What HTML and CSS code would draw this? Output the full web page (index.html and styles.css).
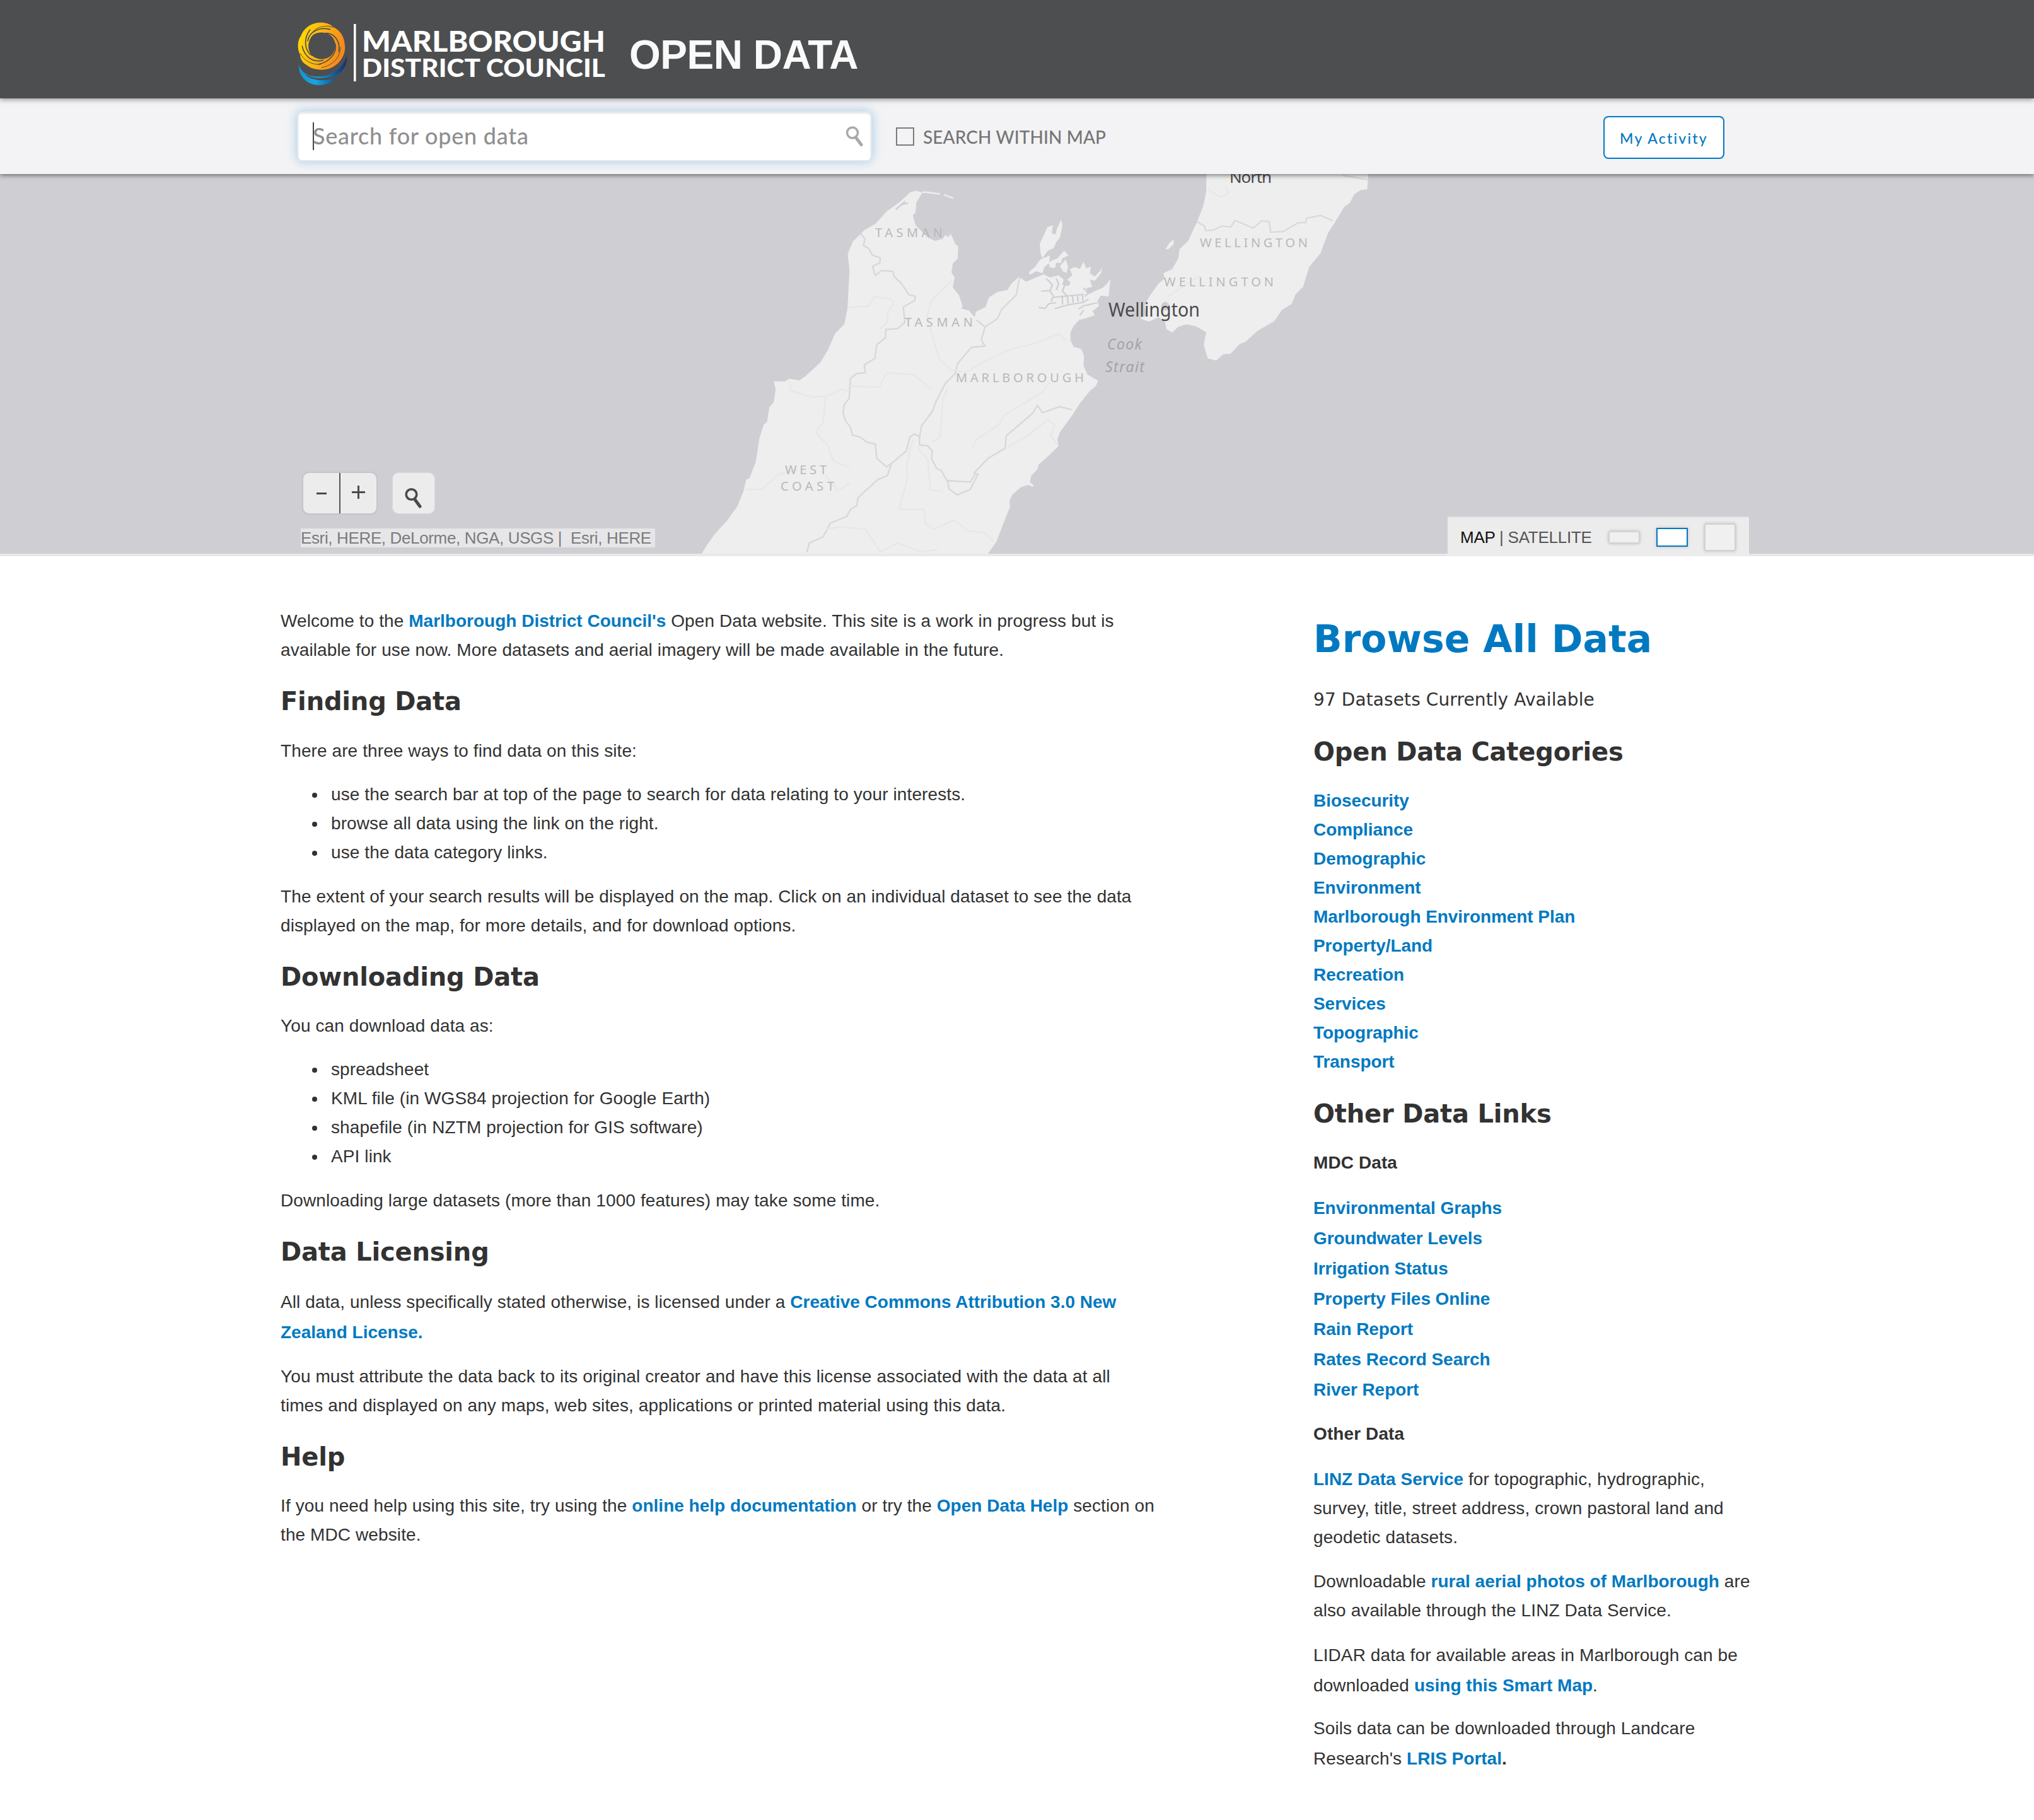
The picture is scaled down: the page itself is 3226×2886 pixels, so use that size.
FILE: index.html
```html
<!DOCTYPE html>
<html lang="en">
<head>
<meta charset="utf-8">
<title>Marlborough District Council Open Data</title>
<link rel="stylesheet" href="styles.css">
</head>
<body>
<header class="masthead">
  <svg class="logo" viewBox="464 26 500 112" role="img" aria-label="Marlborough District Council">
    <defs>
      <linearGradient id="gold" x1="0" y1="0" x2="1" y2="0.3"><stop offset="0" stop-color="#ffe100"/><stop offset="0.5" stop-color="#ffb90f"/><stop offset="1" stop-color="#f58a1c"/></linearGradient>
      <linearGradient id="sea" x1="0" y1="0" x2="1" y2="0"><stop offset="0" stop-color="#1593d2"/><stop offset="0.35" stop-color="#18a5e0"/><stop offset="0.7" stop-color="#0d62a8"/><stop offset="1" stop-color="#1c2a6b"/></linearGradient>
    </defs>
    <g transform="translate(460 20) scale(.33333)">
      <path fill="url(#sea)" d="M41 246C58 300 110 310 160 302C215 292 255 255 271 204C274 250 250 285 215 300C165 318 105 315 70 290C85 318 160 335 225 308C195 335 165 347 130 345C80 340 40 305 41 246Z"/>
      <path fill="url(#gold)" fill-rule="evenodd" d="M120 50C150 42 190 50 205 68C240 85 258 115 260 150C268 190 245 235 205 258C170 280 110 275 80 250C55 235 48 215 48 200C32 170 36 130 52 110C62 80 90 58 120 50ZM105 110C85 135 80 170 100 200C120 222 165 232 195 205C220 180 222 140 200 115C175 90 130 88 105 110Z"/>
      <g fill="none" stroke="#4d4e50" stroke-linecap="round">
        <path stroke-width="5" d="M84 135C90 95 135 65 190 80"/>
        <path stroke-width="3" d="M98 104C120 70 165 55 205 70"/>
        <path stroke-width="5" d="M170 98C215 98 240 140 232 185"/>
        <path stroke-width="5" d="M215 148C225 190 190 235 135 246"/>
        <path stroke-width="3" d="M240 165C238 215 205 250 150 262"/>
        <path stroke-width="5" d="M158 226C115 240 70 215 58 160"/>
        <path stroke-width="3" d="M145 246C105 250 65 228 50 195"/>
        <path stroke-width="5" d="M102 203C70 180 62 125 95 82"/>
      </g>
    </g>
    <rect x="561" y="38" width="3.6" height="91" fill="#fff"/>
    <g fill="#fff" font-family="Lato, sans-serif" font-weight="900">
      <text x="574" y="81.500" font-size="46" textLength="386" lengthAdjust="spacingAndGlyphs">MARLBOROUGH</text>
      <text x="574" y="122" font-size="39" textLength="386" lengthAdjust="spacingAndGlyphs">DISTRICT COUNCIL</text>
    </g>
  </svg>
  <h1 class="site-title">OPEN DATA</h1>
</header>

<div class="searchbar">
  <div class="search-box">
    <span class="caret"></span><span class="placeholder">Search for open data</span>
    <svg class="search-icon" viewBox="0 0 32 36"><circle cx="13" cy="12.500" r="8.500" fill="none" stroke="#a9a9a9" stroke-width="3.500"/><path d="M18 19.500l9 12" stroke="#a9a9a9" stroke-width="5" stroke-linecap="round"/></svg>
  </div>
  <label class="within"><span class="checkbox"></span><span class="within-text">SEARCH WITHIN MAP</span></label>
  <a class="activity">My Activity</a>
</div>

<section class="map">
  <svg class="map-canvas" viewBox="0 276 3226 602">
    <g transform="translate(1080 270) scale(.3954)">
      <path class="land" d="M82 1540L103 1505 135 1460 185 1405 225 1350 250 1290 262 1240 275 1235 300 1170 315 1075 332 1020 345 1010 355 950 372 930 380 880 373 846 415 847 435 836 475 843 500 825 560 770 590 720 618 655 655 618 668 555 671 500 676 400 669 335 690 285 722 255 735 240 780 215 825 165 880 125 920 88 945 82 968 90 944 130 941 170 930 180 941 220 970 250 990 270 1020 283 1050 275 1060 260 1075 268 1080 253 1092 275 1100 295 1112 305 1110 355 1090 375 1085 410 1098 430 1090 470 1115 500 1130 545 1125 555 1155 562 1178 590 1183 568 1222 548 1235 510 1270 488 1310 480 1325 455 1355 428 1385 447 1415 434 1455 417 1480 430 1515 421 1535 438 1530 459 1555 464 1563 451 1550 438 1570 421 1560 396 1580 388 1600 396 1615 367 1625 392 1645 388 1640 413 1660 426 1680 405 1690 388 1685 413 1660 443 1640 438 1650 468 1625 472 1635 497 1660 485 1695 472 1710 455 1723 438 1715 506 1685 502 1670 523 1677 544 1650 565 1660 582 1620 594 1600 598 1575 624 1562 653 1563 683 1575 708 1605 716 1617 742 1615 784 1630 818 1655 834 1673 843 1665 865 1640 885 1600 935 1568 985 1520 1050 1510 1080 1515 1105 1480 1140 1435 1180 1430 1200 1405 1225 1400 1250 1415 1263 1410 1270 1395 1262 1365 1270 1330 1300 1318 1325 1320 1350 1300 1400 1265 1490 1230 1540Z"/>
      <path class="inlet" d="M862 158L885 137 912 132M882 140L900 124"/>
      <path d="M968 88L985 88 1040 95M1055 98L1092 112" stroke="#eee" stroke-width="6" fill="none"/>
      <path class="border" d="M722 255L738 275 732 302 752 312 768 340 800 352 797 372 768 385 780 422 805 402 850 405 855 425 885 455 915 500 940 505 938 522 892 548 898 610 870 635 822 638 820 672 785 700 778 755 735 780 740 812 705 815 680 835 675 915 655 940 650 970 660 1005 680 1030 688 1062 720 1070 745 1090 780 1098 785 1155 825 1190 845 1175 828 1225 790 1240 735 1290 710 1315 705 1345 680 1360 665 1388 600 1415 570 1470 515 1495 505 1532M845 1175L905 1125 918 1070 935 1058 957 1068 957 1102 990 1105 1008 1125 1005 1155 1025 1195 1045 1205 1070 1250 1075 1278 1108 1302 1160 1280 1192 1218 1175 1215 1232 1155 1300 1115 1305 1065 1410 975 1430 943 1450 972 1520 948 1568 960M957 1070L965 1025 1010 965 1022 930 1060 855 1100 815 1110 775 1165 710 1220 705 1205 680 1220 628 1185 600M1220 628L1270 595 1285 560 1345 500 1358 432M1070 1245L1160 1250 1180 1220"/>
      <path class="river" d="M672 550L750 545 775 508 840 515 855 535 830 565 828 610 795 640M1090 440L1005 522 988 585 1005 650 1035 755 1080 800 1145 810 1200 775 1330 715 1400 700 1520 655 1545 685M670 865L795 870 825 812 935 820 1005 880M438 855L442 885 530 910 590 905 640 880 670 885M580 910L570 1010 540 1050 590 1105 610 1165 675 1192M1070 870L1050 920 1040 1070 1010 1088M1170 1115L1185 1080 1275 1020 1300 980 1450 890 1480 850M1310 1110L1390 1065 1470 1000 1500 1018 1485 1065 1510 1100M260 1280L325 1280 390 1220 470 1200M580 1225L630 1285 680 1255M930 1080L905 1180 908 1240 875 1360 975 1360 980 1415 1015 1440 1095 1402 1150 1445 1220 1455 1255 1490M950 1110L990 1160 1000 1280 1050 1290M580 1440L640 1430 740 1440 800 1530 870 1495 960 1530 1030 1522"/>
    </g>
    <g transform="translate(1600 270) scale(.3954 .3333)">
      <path class="land" d="M793 0L792 100 780 170 755 245 720 335 685 375 680 420 655 470 620 490 625 515 600 540 570 590 552 625 545 650 555 690 525 705 562 720 600 700 625 715 632 755 655 772 680 745 712 733 750 742 792 770 782 830 798 895 832 905 860 875 890 872 925 828 950 815 1000 762 1065 718 1095 665 1135 635 1150 590 1180 555 1205 460 1250 395 1280 300 1320 225 1345 175 1368 155 1385 115 1410 95 1438 90 1443 0Z"/>
      <path class="land" d="M660 330L662 350 640 376 628 376 645 345ZM210 235L215 262 205 320 190 342 180 370 155 385 135 418 128 400 124 350 140 310 155 270 177 262 172 300 188 305 192 282ZM222 382L240 405 213 420 210 440 190 440 185 465 165 462 160 440 175 428 195 420ZM165 405L162 440 142 462 135 490 110 480 85 497 80 485 105 460 125 425ZM228 425L238 460 232 488 218 482 205 455Z"/>
      <path class="land" d="M345 575L375 560 395 540 405 520 400 600 370 595 355 620 362 645 335 670 345 690 305 705 288 712 292 670 320 640 310 610Z"/>
      <path class="sea-fill" d="M610 650L615 632 630 624 645 640 640 665 620 668Z"/>
      <path class="inlet" d="M120 652L145 658 160 635 190 630M170 625L175 605 235 598 300 590M185 658L240 640 300 628 320 612M280 660L300 645 355 630M285 690L300 665M150 515L175 545 165 575 180 600M225 545L215 575 232 595M130 575L165 572M215 600L215 640M235 598L238 635M255 596L258 630M275 594L278 625M295 592L298 622M190 515L200 540 190 570M300 560L318 585 305 600"/>
      <path class="border" d="M755 245L785 265 790 287 820 285 855 265 890 270 908 238 980 275 1015 240 1045 245 1050 295 1100 292 1160 250 1190 250 1195 228 1250 215 1300 240M1340 25L1440 45"/>
      <path class="river" d="M800 90L850 128 880 110 870 80M640 600L690 560 770 500"/>
    </g>
    <g class="region">
      <text x="1388" y="375.600" textLength="107">TASMAN</text>
      <text x="1435" y="518" textLength="108">TASMAN</text>
      <text x="1516" y="606" textLength="203">MARLBOROUGH</text>
      <text x="1245" y="752" textLength="66">WEST</text>
      <text x="1238" y="778" textLength="85">COAST</text>
      <text x="1903" y="392" textLength="171">WELLINGTON</text>
      <text x="1846" y="454" textLength="174">WELLINGTON</text>
    </g>
    <g class="strait">
      <text x="1756" y="554" textLength="55">Cook</text>
      <text x="1753" y="590" textLength="62">Strait</text>
    </g>
    <g class="city">
      <text x="1758" y="502" font-size="30" textLength="145" lengthAdjust="spacingAndGlyphs">Wellington</text>
      <text x="1950" y="290" font-size="26" textLength="67">North</text>
    </g>
  </svg>
  <div class="map-tools">
    <div class="tool-row">
      <div class="zoom"><span class="zoom-btn"><i class="minus"></i></span><span class="zoom-btn zoom-in"><i class="minus plus"></i></span></div>
      <div class="locate"><svg viewBox="0 0 66 66"><circle cx="29.500" cy="34" r="8.300" fill="none" stroke="#4a4a4a" stroke-width="3.600"/><path d="M35 42l8 11" stroke="#4a4a4a" stroke-width="5" stroke-linecap="round"/></svg></div>
    </div>
    <div class="attribution">Esri, HERE, DeLorme, NGA, USGS |&nbsp; Esri, HERE</div>
  </div>
  <div class="map-switch">
    <span class="basemap"><b>MAP</b> | SATELLITE</span>
    <span class="size size-s"></span><span class="size size-m"></span><span class="size size-l"></span>
  </div>
</section>

<main class="content">
  <div class="main-col">
    <p>Welcome to the <a>Marlborough District Council's</a> Open Data website. This site is a work in progress but is<br>available for use now. More datasets and aerial imagery will be made available in the future.</p>
    <h2>Finding Data</h2>
    <p>There are three ways to find data on this site:</p>
    <ul>
      <li>use the search bar at top of the page to search for data relating to your interests.</li>
      <li>browse all data using the link on the right.</li>
      <li>use the data category links.</li>
    </ul>
    <p>The extent of your search results will be displayed on the map. Click on an individual dataset to see the data<br>displayed on the map, for more details, and for download options.</p>
    <h2>Downloading Data</h2>
    <p>You can download data as:</p>
    <ul>
      <li>spreadsheet</li>
      <li>KML file (in WGS84 projection for Google Earth)</li>
      <li>shapefile (in NZTM projection for GIS software)</li>
      <li>API link</li>
    </ul>
    <p>Downloading large datasets (more than 1000 features) may take some time.</p>
    <h2>Data Licensing</h2>
    <p class="loose">All data, unless specifically stated otherwise, is licensed under a <a>Creative Commons Attribution 3.0 New<br>Zealand License.</a></p>
    <p>You must attribute the data back to its original creator and have this license associated with the data at all<br>times and displayed on any maps, web sites, applications or printed material using this data.</p>
    <h2>Help</h2>
    <p>If you need help using this site, try using the <a>online help documentation</a> or try the <a>Open Data Help</a> section on<br>the MDC website.</p>
  </div>
  <aside class="side-col">
    <h1 class="browse">Browse All Data</h1>
    <p class="count">97 Datasets Currently Available</p>
    <h2>Open Data Categories</h2>
    <p class="links"><a>Biosecurity</a><a>Compliance</a><a>Demographic</a><a>Environment</a><a>Marlborough Environment Plan</a><a>Property/Land</a><a>Recreation</a><a>Services</a><a>Topographic</a><a>Transport</a></p>
    <h2>Other Data Links</h2>
    <p class="label">MDC Data</p>
    <p class="links loose"><a>Environmental Graphs</a><a>Groundwater Levels</a><a>Irrigation Status</a><a>Property Files Online</a><a>Rain Report</a><a>Rates Record Search</a><a>River Report</a></p>
    <p class="label">Other Data</p>
    <p class="source"><a>LINZ Data Service</a> for topographic, hydrographic,<br>survey, title, street address, crown pastoral land and<br>geodetic datasets.</p>
    <p class="source">Downloadable <a>rural aerial photos of Marlborough</a> are<br>also available through the LINZ Data Service.</p>
    <p class="loose lidar">LIDAR data for available areas in Marlborough can be<br>downloaded <a>using this Smart Map</a>.</p>
    <p class="loose">Soils data can be downloaded through Landcare<br>Research's <a>LRIS Portal</a><b>.</b></p>
  </aside>
</main>
</body>
</html>
```
FILE: styles.css
```css
* { box-sizing: border-box; }
body {
  margin: 0;
  height: 2886px;
  overflow: hidden;
  background: #fff;
  color: #323232;
  font: 28px/46px "Liberation Sans", Arial, sans-serif;
  letter-spacing: 0.1px;
}

.masthead {
  position: relative;
  z-index: 3;
  height: 156px;
  padding-left: 464px;
  display: flex;
  background: #4d4e50;
  box-shadow: 0 2px 8px rgba(0, 0, 0, .4);
}
.logo { width: 500px; height: 112px; margin-top: 26px; }
.site-title {
  margin: 51px 0 0 34px;
  color: #fafafa;
  font-size: 64px;
  line-height: 73px;
  letter-spacing: -0.5px;
}

.searchbar {
  position: relative;
  z-index: 2;
  display: flex;
  height: 120px;
  padding: 20px 491px 0 471px;
  background: #f3f3f5;
  box-shadow: 0 2px 7px rgba(0, 0, 0, .5);
  font-family: Lato, sans-serif;
}
.search-box {
  display: flex;
  align-items: center;
  width: 912px;
  height: 80px;
  padding: 0 10px 0 23px;
  border: 2px solid #dfe5eb;
  border-radius: 8px;
  background: #fff;
  box-shadow: 0 0 16px rgba(120, 180, 225, .65), inset 0 2px 3px rgba(0, 0, 0, .1);
}
.caret { width: 2px; height: 44px; margin-right: -2px; background: #444; }
.placeholder { flex: 1; margin-top: -3px; color: #8f8f8f; font-size: 36px; font-weight: 500; letter-spacing: 0.75px; }
.search-icon { width: 32px; height: 36px; }
.within { display: flex; align-items: center; height: 81px; margin-left: 38px; }
.checkbox { width: 29px; height: 29px; margin-right: 14px; border: 2px solid #7b7b7b; }
.within-text { color: #757575; font-size: 28px; font-weight: 500; letter-spacing: 0.1px; }
.activity {
  width: 192px;
  height: 68px;
  margin: 8px 0 0 auto;
  border: 2px solid #0079c1;
  border-radius: 8px;
  background: #fff;
  color: #0079c1;
  font-size: 23px;
  font-weight: 500;
  line-height: 67px;
  text-align: center;
  letter-spacing: 2.2px;
}

.map { position: relative; height: 606px; background: #cfced3; border-bottom: 4px solid #e9e9ec; }
.map-canvas { display: block; width: 3226px; height: 602px; letter-spacing: normal; }
.land { fill: #eee; }
.sea-fill { fill: #cfced3; }
.inlet { fill: none; stroke: #cfced3; stroke-width: 6; }
.border { fill: none; stroke: #d8d8da; stroke-width: 6; stroke-linejoin: round; }
.river { fill: none; stroke: #e7e7eb; stroke-width: 6; stroke-linejoin: round; }
.region { fill: #b8b8ba; font: 20px "Noto Sans", sans-serif; }
.strait { fill: #a3a2a8; font: italic 23px "Noto Sans", sans-serif; }
.city { fill: #4a4a4c; font-family: "Noto Sans", sans-serif; }

.map-tools { position: absolute; left: 477px; bottom: 10px; }
.tool-row { display: flex; gap: 26px; padding-left: 4px; }
.zoom { display: flex; border-radius: 9px; background: #ececec; box-shadow: 0 0 2px 2px #c5c5c8; }
.zoom-btn { position: relative; display: flex; align-items: center; justify-content: center; width: 57px; height: 64px; }
.zoom-in { width: 59px; border-left: 2px solid #555; }
.minus { width: 16px; height: 3px; background: #4a4a4a; }
.plus { position: relative; top: -2px; width: 21px; }
.plus::after { content: ""; position: absolute; left: 9px; top: -9px; width: 3px; height: 21px; background: #4a4a4a; }
.locate { width: 66px; height: 64px; border-radius: 9px; background: #ececec; box-shadow: 0 0 2px 1px #dadade; }
.locate svg { display: block; width: 66px; height: 66px; }
.attribution {
  width: 562px;
  height: 30px;
  margin-top: 24px;
  background: #e6e6e9;
  color: #7b7b7b;
  font-size: 26px;
  line-height: 31px;
  letter-spacing: -0.36px;
  white-space: pre;
}
.map-switch {
  position: absolute;
  left: 2296px;
  bottom: -4px;
  display: flex;
  align-items: center;
  width: 478px;
  height: 63px;
  padding: 0 20px;
  background: #ececec;
  border-top: 2px solid #e2e2e5;
}
.basemap { width: 235px; color: #555; font-size: 26px; letter-spacing: -0.25px; white-space: nowrap; }
.basemap b { color: #111; font-weight: 400; }
.size { width: 50px; margin-right: 26px; flex: none; background: #f0f0f0; box-shadow: 0 0 5px rgba(0, 0, 0, .2); border: 2px solid #d2d2d2; border-radius: 3px; }
.size-s { height: 20px; }
.size-m { height: 30px; border-color: #0079c1; background: #fff; border-radius: 0; }
.size-l { height: 44px; margin-right: 0; }

.content { display: grid; grid-template-columns: 1638px 700px; padding: 80px 0 0 445px; white-space: nowrap; }
p, ul { margin: 0 0 23px; }
h2 {
  margin: 36px 0 32px;
  font: bold 40px/46px "DejaVu Sans", Verdana, sans-serif;
  letter-spacing: -0.2px;
}
.main-col h2 { margin-top: 35px; margin-bottom: 32.5px; }
p:has(+ h2) { margin-bottom: 0; }
ul { padding-left: 80px; margin-bottom: 24px; list-style: none; }
li::before {
  content: "";
  display: inline-block;
  width: 8px;
  height: 8px;
  margin: 0 22px 0 -30px;
  border-radius: 50%;
  background: #323232;
  vertical-align: 4px;
}
a { color: #0079c1; font-weight: 700; letter-spacing: 0; }
.links a { display: block; letter-spacing: -0.06px; }
.loose { line-height: 48px; }
.browse {
  margin: 16px 0 38.5px;
  color: #0079c1;
  font: bold 60px/70px "DejaVu Sans", Verdana, sans-serif;
  letter-spacing: 0;
}
.count { font-family: "DejaVu Sans", Verdana, sans-serif; }
.label { font-weight: 700; margin-bottom: 25.5px; }
.source { margin-bottom: 24px; }
.lidar { margin-bottom: 20px; }
```
